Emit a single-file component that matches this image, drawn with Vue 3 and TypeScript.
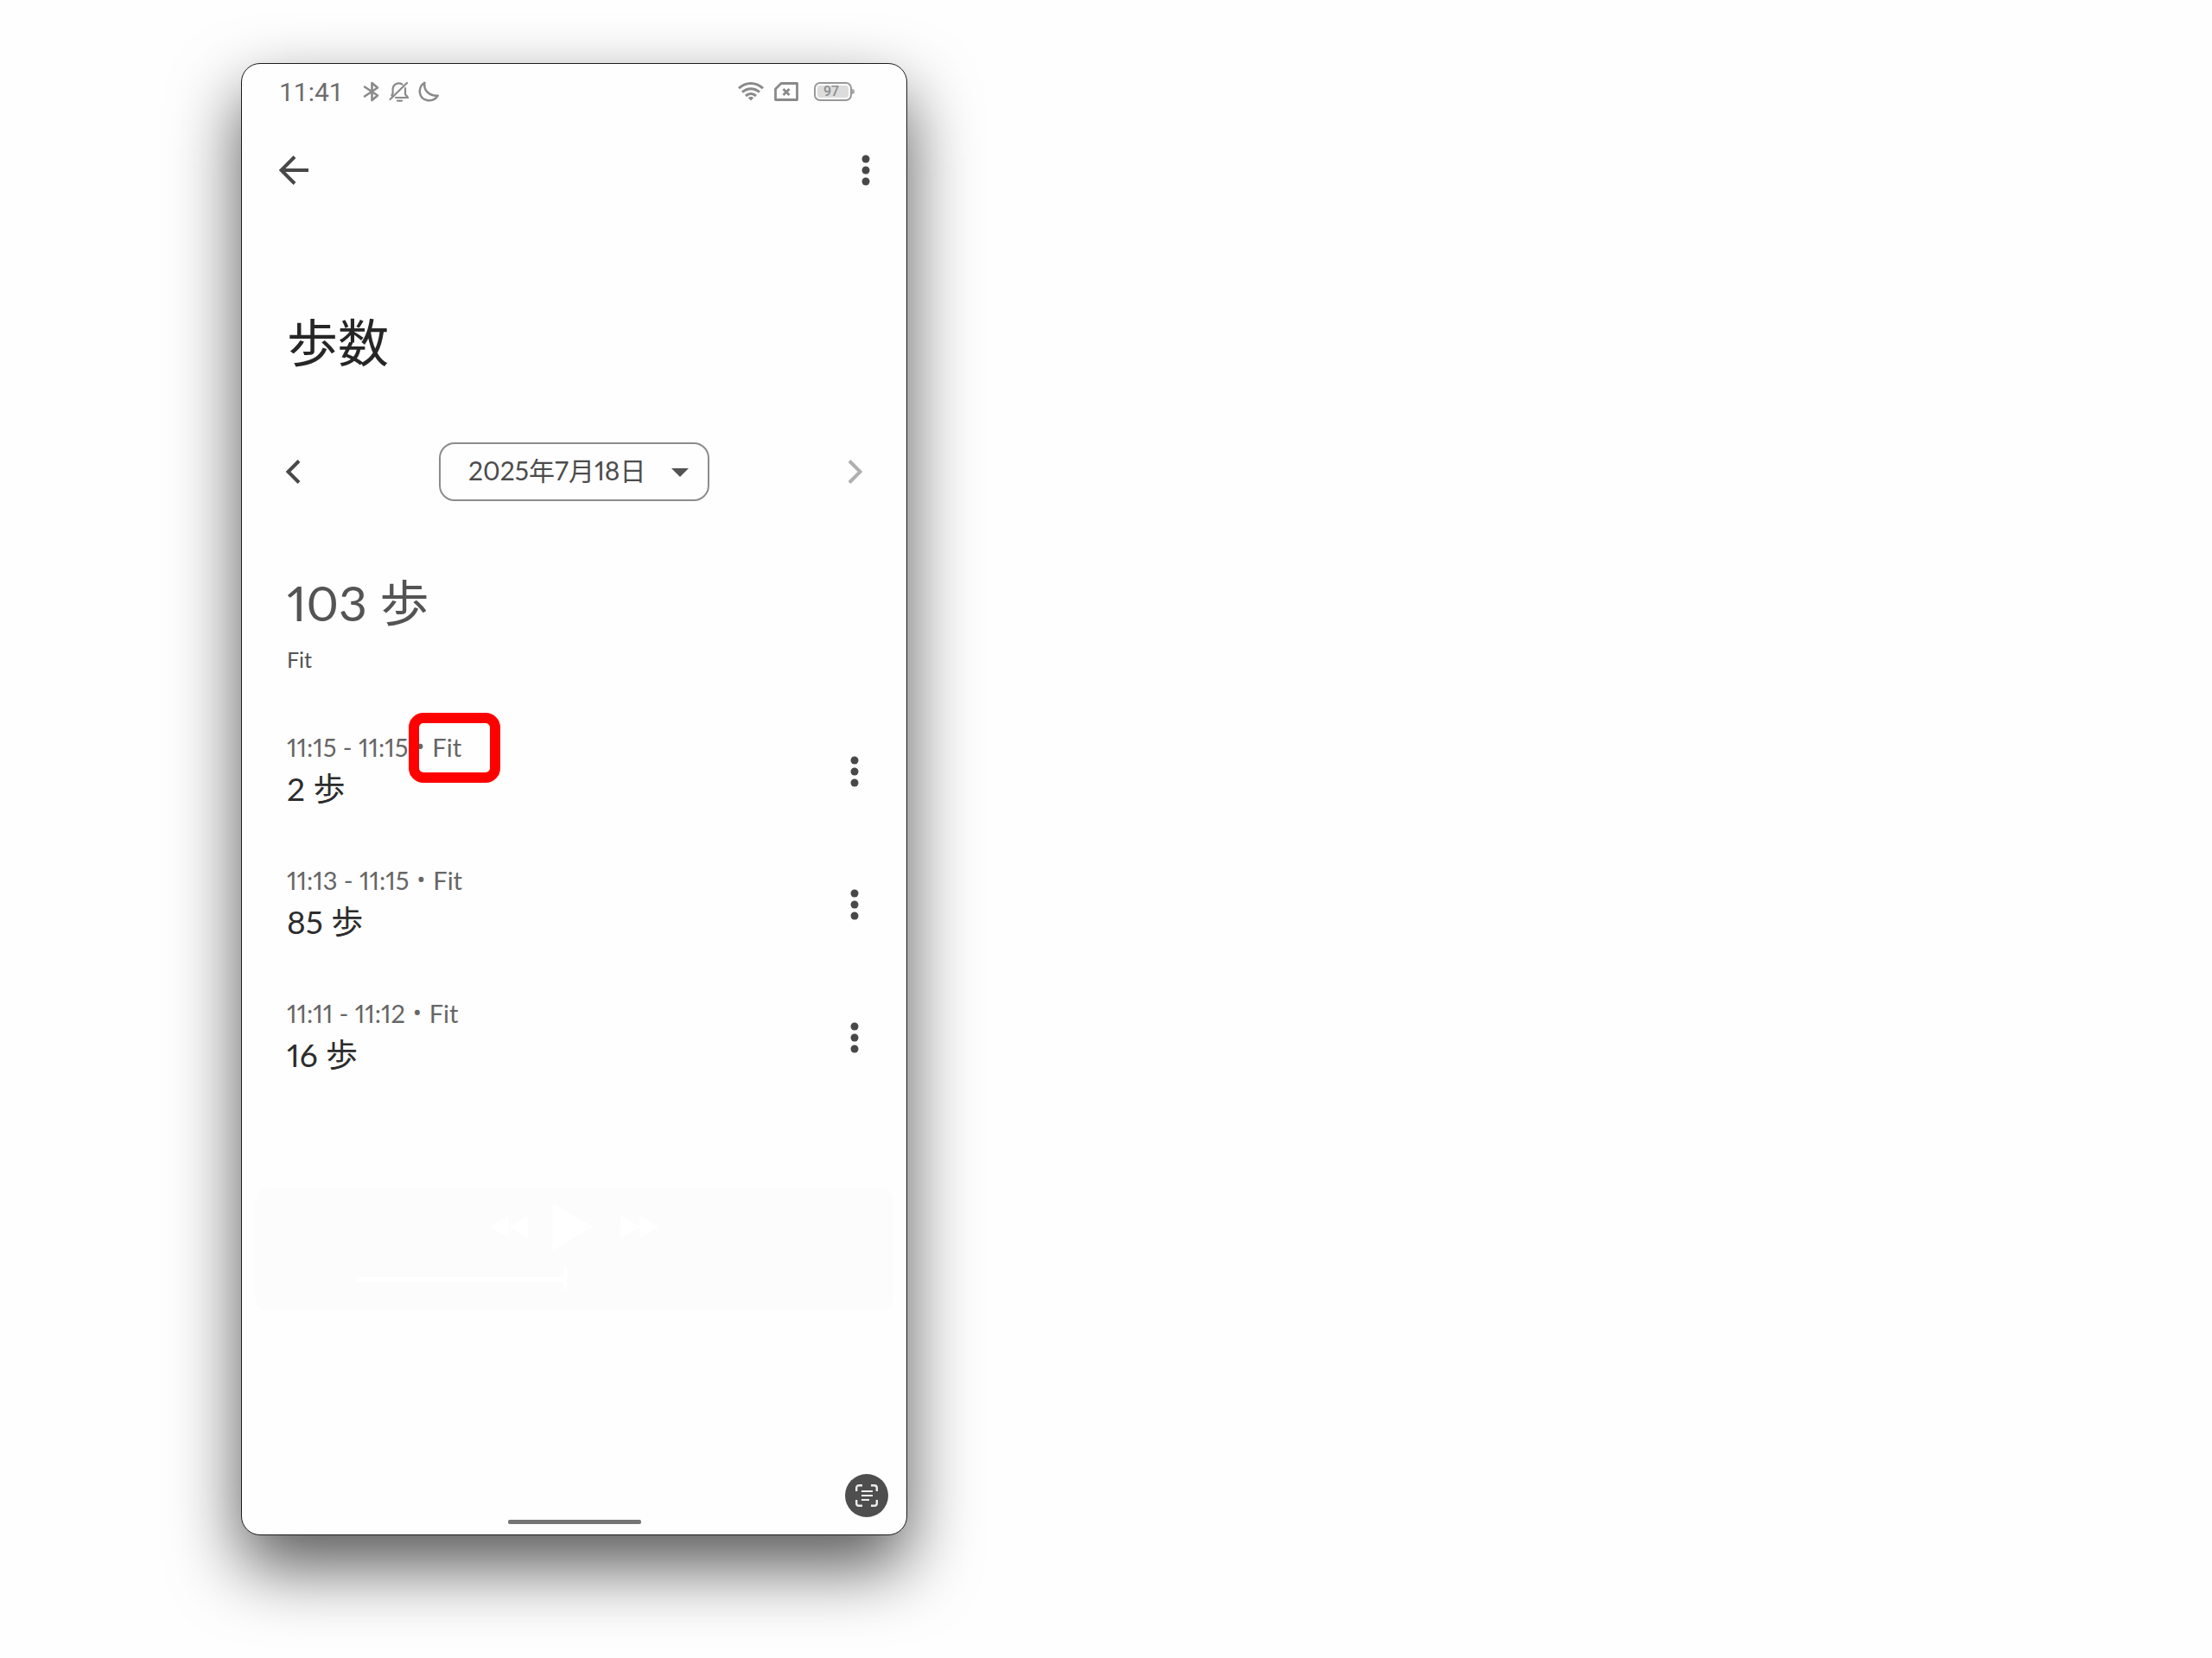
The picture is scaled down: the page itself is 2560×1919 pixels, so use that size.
<script setup lang="ts">
import { ref } from 'vue'

interface StepEntry {
  id: number
  range: string
  source: string
  value: string
  marked: boolean
}

const dates: string[] = ['2025年7月18日']
const selectedDate = ref<string>(dates[0])

const entries: StepEntry[] = [
  { id: 1, range: '11:15 - 11:15', source: 'Fit', value: '2 歩', marked: true },
  { id: 2, range: '11:13 - 11:15', source: 'Fit', value: '85 歩', marked: false },
  { id: 3, range: '11:11 - 11:12', source: 'Fit', value: '16 歩', marked: false },
]
</script>

<template>
  <div class="page">
    <main class="phone">
      <div class="status">
        <span class="clock">11:41</span>
        <div class="status-left">
          <svg width="20" height="24" viewBox="0 0 20 24" fill="none" stroke="currentColor" stroke-width="2.6" stroke-linejoin="round" stroke-linecap="round">
            <path d="M2 6.5 17 16.5 10.5 22V2L17 7.5 2 17.5" />
          </svg>
          <svg width="24" height="24" viewBox="0 0 24 24" fill="none" stroke="currentColor" stroke-width="2.2" stroke-linecap="round" stroke-linejoin="round">
            <path d="M15.5 3.6A7 7 0 0 0 4.6 9.5V14L3.4 16.5M19 8v7l3 4H8M21 2 1.5 21M10 22.6h5" />
          </svg>
          <svg width="24" height="24" viewBox="0 0 24 24" fill="none" stroke="currentColor" stroke-width="2.5" stroke-linejoin="round">
            <path d="M7.4 1.8C-1 7.2 0 20.5 11 22.2c5.3.6 9.5-1.7 11.7-5.5C13.5 17.5 6 11 7.4 1.8Z" />
          </svg>
        </div>
        <div class="status-right">
          <svg width="30" height="22" viewBox="0 0 30 22" fill="none" stroke="currentColor" stroke-width="3">
            <path d="M1 7.2C9.5-.4 20.5-.4 29 7.2M5 11.6c6-5.3 14-5.3 20 0M9 16c3.7-3.2 8.3-3.2 12 0" />
            <path d="m15 21.5-3.2-3.2c1.7-1.7 4.7-1.7 6.4 0Z" fill="currentColor" stroke="none" />
          </svg>
          <svg class="sim" width="28" height="22" viewBox="0 0 28 22" fill="none" stroke="currentColor" stroke-width="2.8">
            <path d="M8 1.5h18.5v19h-25V8Z" stroke-linejoin="round" />
            <path d="m10.500 8 7 7m0-7-7 7" />
          </svg>
          <span class="battery"><span class="level">97</span></span>
        </div>
      </div>

      <header class="appbar">
        <button class="icon-button" type="button" aria-label="戻る">
          <svg width="34" height="34" viewBox="0 0 34 34" fill="none" stroke="currentColor" stroke-width="4">
            <path d="M34 17H3M18 1.5 2.5 17 18 32.5" />
          </svg>
        </button>
        <button class="icon-button" type="button" aria-label="メニュー">
          <svg width="10" height="36" viewBox="0 0 10 36" fill="currentColor">
            <circle cx="5" cy="5" r="4.5" /><circle cx="5" cy="18" r="4.5" /><circle cx="5" cy="31" r="4.5" />
          </svg>
        </button>
      </header>

      <h1>歩数</h1>

      <div class="date-row">
        <button class="icon-button" type="button" aria-label="前の日">
          <svg width="18" height="28" viewBox="0 0 18 28" fill="none" stroke="currentColor" stroke-width="4">
            <path d="M16 1.5 3.5 14 16 26.5" />
          </svg>
        </button>
        <div class="date-box">
          <select v-model="selectedDate" aria-label="日付">
            <option v-for="d in dates" :key="d" :value="d">{{ d }}</option>
          </select>
          <svg class="caret" width="20" height="10" viewBox="0 0 20 10"><path d="M0 0h20L10 10Z" fill="currentColor" /></svg>
        </div>
        <button class="icon-button next" type="button" aria-label="次の日">
          <svg width="18" height="28" viewBox="0 0 18 28" fill="none" stroke="currentColor" stroke-width="4">
            <path d="M2 1.5 14.5 14 2 26.5" />
          </svg>
        </button>
      </div>

      <section class="summary">
        <p class="total">103 歩</p>
        <p class="origin">Fit</p>
      </section>

      <ul class="entries">
        <li v-for="entry in entries" :key="entry.id">
          <div>
            <p class="meta">
              <span>{{ entry.range }}</span>
              <span class="dot">•</span>
              <span class="source" :class="{ marked: entry.marked }">{{ entry.source }}</span>
            </p>
            <p class="value">{{ entry.value }}</p>
          </div>
          <button class="icon-button" type="button" :aria-label="entry.value">
            <svg width="10" height="36" viewBox="0 0 10 36" fill="currentColor">
              <circle cx="5" cy="5" r="4.5" /><circle cx="5" cy="18" r="4.5" /><circle cx="5" cy="31" r="4.5" />
            </svg>
          </button>
        </li>
      </ul>

      <div class="player">
        <svg viewBox="0 0 740 140" width="100%" height="140" fill="#fff" aria-hidden="true">
          <path d="M345 18v54l47-27ZM294 32v26l-22-13ZM316 32v26l-22-13ZM424 32v26l22-13ZM446 32v26l22-13Z" />
          <path d="M117 103h240V91h5v26h-5v-8H117Z" />
        </svg>
      </div>

      <button class="scan" type="button" aria-label="スキャン">
        <svg width="26" height="26" viewBox="0 0 26 26" fill="none" stroke="currentColor" stroke-width="2.4">
          <path d="M1.2 8V4A2.8 2.8 0 0 1 4 1.2h4M18 1.2h4A2.8 2.8 0 0 1 24.8 4v4M24.8 18v4a2.8 2.8 0 0 1-2.8 2.8h-4M8 24.8H4A2.8 2.8 0 0 1 1.2 22v-4" />
          <path d="M7 8h13M7 13h13M7 18h9" stroke-width="2" />
        </svg>
      </button>
      <div class="home-indicator"></div>
    </main>
  </div>
</template>

<style>
body {
  background: #fefefe;
}
</style>

<style scoped>
.page {
  box-sizing: border-box;
  min-height: 100vh;
  padding: 73px 0 142px;
  display: grid;
  grid-template-columns: 279fr minmax(560px, 771fr) 1510fr;
  font-family: Lato, 'Noto Sans CJK JP', sans-serif;
  font-variant-numeric: proportional-nums;
  color: #545454;
}

.phone {
  grid-column: 2;
  position: relative;
  display: flex;
  flex-direction: column;
  background: #fefefe;
  border: 1px solid #1c1c1c;
  border-radius: 22px;
  box-shadow: 0 36px 80px rgba(0, 0, 0, 0.66);
}

h1,
p,
ul {
  margin: 0;
  padding: 0;
  font-weight: 400;
}

.status {
  display: flex;
  align-items: center;
  height: 64px;
  padding: 0 59px 0 43px;
  color: #8a8a8a;
}

.clock {
  padding-top: 2px;
  font: 400 30px/40px Roboto, sans-serif;
  color: #6c6c6c;
}

.status-left {
  display: flex;
  gap: 10px;
  margin-left: 22px;
}

.status-right {
  display: flex;
  align-items: center;
  margin-left: auto;
}

.sim {
  margin: 0 18px 0 12px;
}

.battery {
  position: relative;
  box-sizing: border-box;
  width: 44px;
  height: 22px;
  margin-right: 4px;
  padding: 2px;
  border: 2px solid #999;
  border-radius: 7px;
}

.battery::after {
  content: '';
  position: absolute;
  top: 6px;
  right: -5px;
  width: 3px;
  height: 6px;
  border-radius: 0 3px 3px 0;
  background: #a8a8a8;
}

.level {
  display: block;
  padding-right: 4px;
  border-radius: 3px;
  background: #dcdcdc;
  font: 500 16px/14px Roboto, sans-serif;
  text-align: center;
  color: #8e8e8e;
}

.icon-button {
  display: flex;
  align-items: center;
  justify-content: center;
  width: 36px;
  height: 48px;
  padding: 0;
  border: 0;
  background: none;
  color: #484848;
}

.icon-button.next {
  color: #b0b0b0;
}

.appbar {
  display: flex;
  align-items: center;
  justify-content: space-between;
  height: 118px;
  padding: 0 29px 0 42px;
}

h1 {
  margin: 101px 52px 0;
  font-size: 59px;
  line-height: 80px;
  color: #262626;
}

.date-row {
  display: flex;
  align-items: center;
  justify-content: space-between;
  margin-top: 75px;
  padding: 0 41px;
}

.date-box {
  position: relative;
}

select {
  appearance: none;
  box-sizing: border-box;
  width: 313px;
  height: 68px;
  padding: 0 60px 4px 32px;
  border: 2px solid #8c8c8c;
  border-radius: 18px;
  background: transparent;
  font: inherit;
  font-size: 30px;
  font-variant-numeric: proportional-nums;
  color: #4c4c4c;
}

.caret {
  position: absolute;
  top: 30px;
  right: 24px;
  pointer-events: none;
}

.summary {
  margin: 81px 52px 0;
}

.total {
  font-size: 57px;
  line-height: 72px;
}

.origin {
  margin-top: 14px;
  font-size: 25px;
  line-height: 32px;
}

.entries {
  margin-top: 37px;
  list-style: none;
}

.entries li {
  display: flex;
  align-items: center;
  justify-content: space-between;
  height: 154px;
  padding: 0 42px 0 52px;
}

.meta {
  display: flex;
  gap: 9px;
  font-size: 29px;
  line-height: 40px;
  color: #666;
}

.dot {
  font-family: Roboto, sans-serif;
}

.source {
  position: relative;
}

.marked::after {
  content: '';
  position: absolute;
  top: -20px;
  left: -27px;
  box-sizing: border-box;
  width: 106px;
  height: 81px;
  border: 12px solid #f00;
  border-radius: 17px;
}

.value {
  margin: 4px 0 4px;
  font-size: 37px;
  line-height: 48px;
  color: #2c2c2c;
}

.player {
  margin: 97px 15px 60px;
  height: 142px;
  border-radius: 16px;
  background: #fcfcfc;
}

.scan {
  position: absolute;
  right: 21px;
  bottom: 20px;
  display: flex;
  align-items: center;
  justify-content: center;
  width: 50px;
  height: 50px;
  padding: 0;
  border: 0;
  border-radius: 50%;
  background: #4e4e4e;
  color: #ececec;
}

.home-indicator {
  width: 154px;
  height: 5px;
  margin: auto auto 12px;
  border-radius: 2px;
  background: #757575;
}
</style>
